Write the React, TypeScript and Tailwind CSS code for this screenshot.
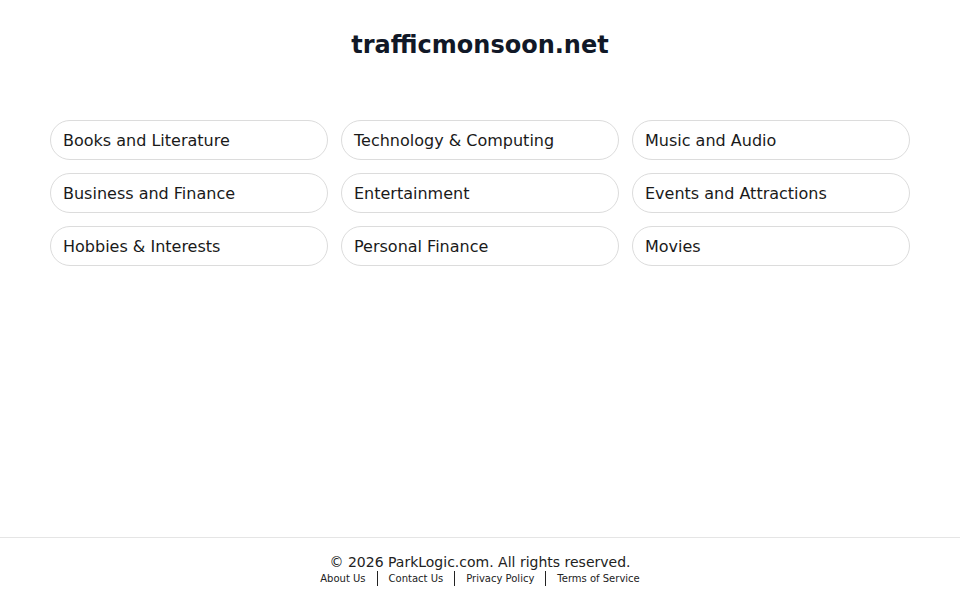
const categories = [
  'Books and Literature',
  'Technology & Computing',
  'Music and Audio',
  'Business and Finance',
  'Entertainment',
  'Events and Attractions',
  'Hobbies & Interests',
  'Personal Finance',
  'Movies',
]

const links = ['About Us', 'Contact Us', 'Privacy Policy', 'Terms of Service']

export default function App() {
  return (
    <div
      className="min-h-screen flex flex-col bg-white text-[#1f2328]"
      style={{ fontFamily: '"DejaVu Sans", Verdana, sans-serif' }}
    >
      <main className="flex-1 px-[50px]">
        <h1 className="pt-[30px] text-center text-[24px] font-bold leading-[30px] text-[#111827]">
          trafficmonsoon.net
        </h1>
        {/* Category pills */}
        <div className="mt-[60px] grid grid-cols-3 gap-[13px]">
          {categories.map((c) => (
            <a
              key={c}
              href="#"
              className="flex h-10 items-center rounded-full border border-[#dcdcdc] px-[12px] pt-[2px] text-[16px] text-[#1a1a1a]"
            >
              {c}
            </a>
          ))}
        </div>
      </main>
      {/* Footer */}
      <footer className="border-t border-[#e5e5e5] pt-[15px] pb-[14px] text-center">
        <p className="text-[14px] leading-[18px] text-[#222]">© 2026 ParkLogic.com. All rights reserved.</p>
        <div className="flex items-center justify-center text-[10px] leading-[14px] text-[#222]">
          {links.map((l, i) => (
            <div key={l} className="flex items-center">
              {i > 0 && <span className="mx-[11px] h-[15px] border-l border-[#222]" />}
              <a href="#">{l}</a>
            </div>
          ))}
        </div>
      </footer>
    </div>
  )
}
